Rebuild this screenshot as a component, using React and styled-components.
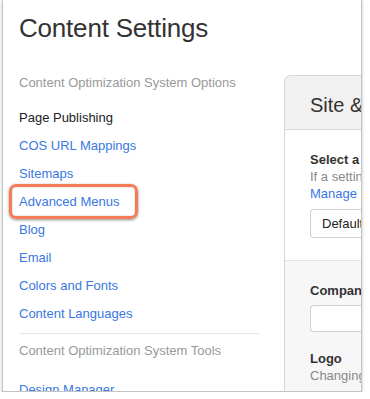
import React from 'react'
import styled, { createGlobalStyle } from 'styled-components'

const GlobalStyle = createGlobalStyle`
  html, body {
    margin: 0;
    padding: 0;
    background: #fff;
  }
  body {
    font-family: "Liberation Sans", Arial, sans-serif;
    -webkit-font-smoothing: antialiased;
  }
`

const Frame = styled.div`
  margin-left: 2px;
  width: 360px;
  height: 392px;
  border: 1px solid #c4c4c4;
  border-top: none;
  box-shadow: 0 1px 3px rgba(0, 0, 0, 0.25);
  overflow: hidden;
  padding-left: 16px;
  box-sizing: border-box;
`

const Title = styled.h1`
  margin: 13px 0 0;
  font-size: 26px;
  font-weight: 400;
  line-height: 30px;
  color: #333;
  letter-spacing: -0.2px;
`

const Body = styled.div`
  display: flex;
  gap: 25px;
  margin-top: 30px;
`

const Sidebar = styled.div`
  width: 240px;
  flex-shrink: 0;
  display: flex;
  flex-direction: column;
`

const GroupLabel = styled.div`
  font-size: 13px;
  line-height: 20px;
  color: #999;
  margin-bottom: ${p => p.$gap || 11}px;
`

const NavItem = styled.a`
  position: relative;
  display: block;
  font-size: 13px;
  line-height: 28px;
  color: ${p => (p.$active ? '#222' : '#3a78e2')};
  text-decoration: none;
  width: fit-content;
`

const Highlight = styled.span`
  position: absolute;
  left: -10px;
  right: -19px;
  top: -4px;
  bottom: -3px;
  border: 3px solid #f47c58;
  border-radius: 7px;
  box-shadow: 0 1px 3px rgba(0, 0, 0, 0.45), inset 0 0 2px rgba(0, 0, 0, 0.25);
  pointer-events: none;
`

const Divider = styled.hr`
  border: none;
  border-top: 1px solid #e6e6e6;
  margin: 5px 0 7px;
  width: 100%;
`

const Panel = styled.div`
  flex: 1;
  min-width: 140px;
  border: 1px solid #d6d6d6;
  border-right: none;
  border-top-left-radius: 7px;
  margin-top: 2px;
  overflow: hidden;
`

const PanelHeader = styled.div`
  height: 54px;
  box-sizing: border-box;
  background: #f1f1f1;
  border-bottom: 1px solid #d9d9d9;
  display: flex;
  align-items: center;
  padding: 5px 0 0 25px;
  font-size: 20px;
  color: #333;
  white-space: nowrap;
`

const Section = styled.div`
  padding: 22px 0 22px 25px;
  background: ${p => (p.$muted ? '#f7f7f7' : '#fff')};
  border-top: ${p => (p.$muted ? '1px solid #e3e3e3' : 'none')};
  white-space: nowrap;
`

const FieldLabel = styled.div`
  font-size: 13px;
  font-weight: 700;
  line-height: 16px;
  color: #333;
`

const Help = styled.div`
  font-size: 13px;
  line-height: 17px;
  color: #888;
`

const HelpLink = styled.div`
  font-size: 13px;
  line-height: 17px;
  color: #3a78e2;
`

const SelectBox = styled.div`
  margin-top: 7px;
  height: 27px;
  border: 1px solid #d0d0d0;
  border-right: none;
  border-radius: 4px 0 0 4px;
  background: #fff;
  display: flex;
  align-items: center;
  padding-left: 11px;
  font-size: 13px;
  color: #222;
`

const InputBox = styled.div`
  margin-top: 6px;
  height: 25px;
  border: 1px solid #d0d0d0;
  border-right: none;
  border-radius: 4px 0 0 4px;
  background: #fff;
`

const Spacer = styled.div`
  height: 19px;
`

const optionLinks = [
  'COS URL Mappings',
  'Sitemaps',
  'Advanced Menus',
  'Blog',
  'Email',
  'Colors and Fonts',
  'Content Languages',
]

const App = () => {
  return (
    <>
      <GlobalStyle />
      <Frame>
        <Title>Content Settings</Title>
        <Body>
          <Sidebar>
            <GroupLabel>Content Optimization System Options</GroupLabel>
            <NavItem $active>Page Publishing</NavItem>
            {optionLinks.map(name => (
              <NavItem key={name}>
                {name}
                {name === 'Advanced Menus' && <Highlight />}
              </NavItem>
            ))}
            <Divider />
            <GroupLabel $gap={15}>Content Optimization System Tools</GroupLabel>
            <NavItem>Design Manager</NavItem>
          </Sidebar>
          <Panel>
            <PanelHeader>Site &amp; Domain Settings</PanelHeader>
            <Section>
              <FieldLabel>Select a domain</FieldLabel>
              <Help>If a setting is not set for a domain</Help>
              <HelpLink>Manage Domains</HelpLink>
              <SelectBox>Default</SelectBox>
            </Section>
            <Section $muted>
              <FieldLabel>Company Name</FieldLabel>
              <InputBox />
              <Spacer />
              <FieldLabel>Logo</FieldLabel>
              <Help>Changing your logo</Help>
            </Section>
          </Panel>
        </Body>
      </Frame>
    </>
  )
}

export default App
